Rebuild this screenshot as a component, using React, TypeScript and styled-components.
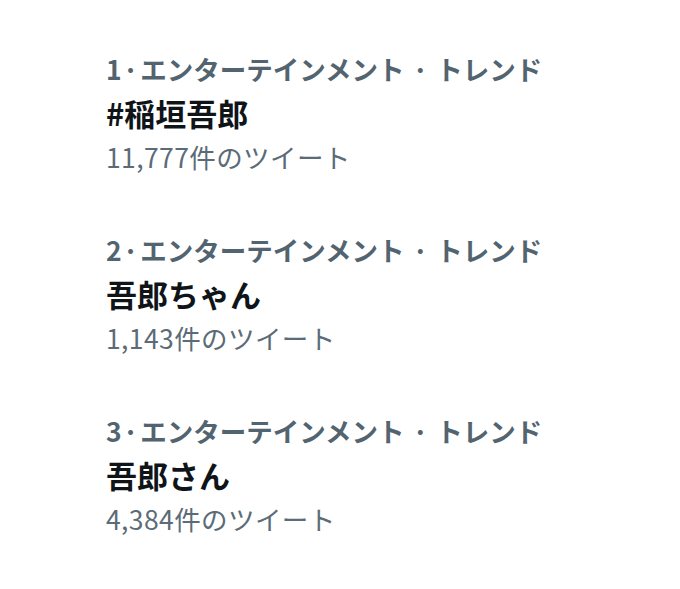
import React from "react";
import styled, {createGlobalStyle} from "styled-components";

const GlobalStyle = createGlobalStyle`
  html, body {
    margin: 0;
    padding: 0;
    background: #ffffff;
  }
  body {
    font-family: "Noto Sans CJK JP", "Noto Sans", sans-serif;
  }
`;

const Page = styled.main`
  width: 680px;
  height: 589px;
  box-sizing: border-box;
  padding: 47px 0 0 106px;
  display: flex;
  flex-direction: column;
  gap: 50px;
  background: #ffffff;
`;

const TrendItem = styled.section`
  display: flex;
  flex-direction: column;
`;

const Category = styled.div`
  font-size: 26.5px;
  line-height: 44px;
  font-weight: 600;
  color: #536471;
  white-space: nowrap;
`;

const Dot = styled.span<{$tight?: boolean}>`
  margin: ${(p) => (p.$tight ? "0 2px 0 1px" : "0 8px")};
`;

const Title = styled.div`
  font-size: 31px;
  line-height: 44px;
  font-weight: 700;
  color: #0f1419;
`;

const Count = styled.div`
  font-size: 26.5px;
  line-height: 43px;
  font-weight: 400;
  letter-spacing: 0.4px;
  color: #5b6b77;
`;

type Trend = {rank: number; title: string; count: string};

const trends: Trend[] = [
  {rank: 1, title: "#稲垣吾郎", count: "11,777"},
  {rank: 2, title: "吾郎ちゃん", count: "1,143"},
  {rank: 3, title: "吾郎さん", count: "4,384"},
];

const App: React.FC = () => {
  return (
    <>
      <GlobalStyle />
      <Page>
        {trends.map((t) => (
          <TrendItem key={t.rank}>
            <Category>
              {t.rank}
              <Dot $tight>·</Dot>エンターテインメント<Dot>·</Dot>トレンド
            </Category>
            <Title>{t.title}</Title>
            <Count>{t.count}件のツイート</Count>
          </TrendItem>
        ))}
      </Page>
    </>
  );
};

export default App;
